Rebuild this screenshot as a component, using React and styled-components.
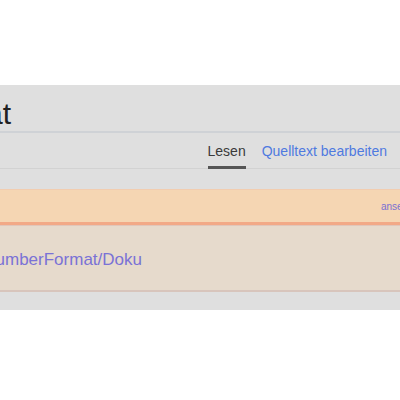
import React from "react";
import styled, { createGlobalStyle } from "styled-components";

const Global = createGlobalStyle`
  html, body { margin: 0; padding: 0; background: #ffffff; }
  body { font-family: "Liberation Sans", Arial, sans-serif; overflow: hidden; }
`;

const Screen = styled.div`
  width: 400px;
  height: 400px;
  overflow: hidden;
  background: #ffffff;
  display: flex;
  flex-direction: column;
`;

const TopSpace = styled.div`
  height: 85px;
  flex: none;
`;

const Backdrop = styled.div`
  background: #dfdfdf;
  height: 225px;
  flex: none;
  display: flex;
  flex-direction: column;
`;

const TitleRow = styled.div`
  height: 48px;
  border-bottom: 2px solid #cfd2d6;
  display: flex;
  align-items: flex-end;
  box-sizing: border-box;
  flex: none;
`;

const EndAnchored = styled.div`
  display: flex;
  justify-content: flex-end;
  width: ${(p) => p.$w}px;
  flex: none;
  white-space: nowrap;
`;

const Title = styled.h1`
  margin: 0;
  font-family: "Liberation Sans", Arial, sans-serif;
  font-weight: normal;
  font-size: 30px;
  line-height: 34px;
  color: #202122;
`;

const TabBar = styled.div`
  height: 36px;
  border-bottom: 1px solid #d2d2d2;
  display: flex;
  justify-content: flex-end;
  align-items: stretch;
  gap: 16px;
  padding-right: 13px;
  box-sizing: border-box;
  flex: none;
`;

const Tab = styled.a`
  display: flex;
  align-items: center;
  font-size: 14px;
  color: ${(p) => (p.$active ? "#3a3a3a" : "#4f7ae0")};
  border-bottom: 3px solid ${(p) => (p.$active ? "#555555" : "transparent")};
  padding-top: 3px;
  margin-bottom: -1px;
  text-decoration: none;
`;

const Notice = styled.div`
  margin-top: 20px;
  height: 36px;
  background: #f5d6b3;
  border-top: 1px solid #f2cdb0;
  border-bottom: 3px solid #f2a987;
  box-sizing: border-box;
  display: flex;
  align-items: center;
  padding-left: 381px;
  overflow: hidden;
  flex: none;
`;

const NoticeText = styled.span`
  font-size: 10px;
  color: #7a70d2;
  white-space: nowrap;
`;

const DocBox = styled.div`
  height: 67px;
  background: #e6dacc;
  border-top: 1px solid #e0c6ba;
  border-bottom: 2px solid #d8c5bc;
  box-sizing: border-box;
  display: flex;
  align-items: center;
  padding-top: 3px;
  flex: none;
`;

const DocLink = styled.a`
  font-size: 17px;
  color: #7a72d6;
  text-decoration: none;
`;

export default function App() {
  return (
    <Screen>
      <Global />
      <TopSpace />
      <Backdrop>
        <TitleRow>
          <EndAnchored $w={11}>
            <Title>Modul:NumberFormat</Title>
          </EndAnchored>
        </TitleRow>
        <TabBar>
          <Tab $active>Lesen</Tab>
          <Tab>Quelltext bearbeiten</Tab>
        </TabBar>
        <Notice>
          <NoticeText>ansehen</NoticeText>
        </Notice>
        <DocBox>
          <EndAnchored $w={142}>
            <DocLink>Modul:NumberFormat/Doku</DocLink>
          </EndAnchored>
        </DocBox>
      </Backdrop>
    </Screen>
  );
}
